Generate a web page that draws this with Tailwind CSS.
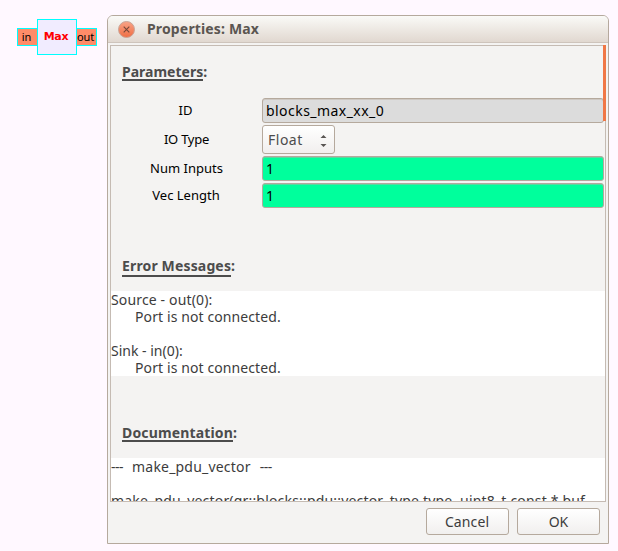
<!DOCTYPE html>
<html lang="en">
<head>
<meta charset="utf-8">
<title>Properties: Max</title>
<script src="https://cdn.jsdelivr.net/npm/@tailwindcss/browser@4"></script>
</head>
<body class="relative h-[551px] w-[618px] overflow-hidden bg-[#fff8ff] font-['Noto_Sans',sans-serif] text-[14px] leading-[17px] text-[#3c3c3c]">
<!-- Flow graph block -->
<div class="absolute left-[17px] top-[19px] flex items-center text-[11px] leading-[15px] text-black">
  <div class="h-[18px] w-[20px] border border-r-0 border-[#00ffff] bg-[#ff8c69] pr-[2px] text-center"><span>in</span></div>
  <div class="h-[36px] w-10 border border-[#00ffff] bg-[#f1ecff] pr-[2px] text-center font-['DejaVu_Sans',sans-serif] text-[11px] font-bold leading-[33px] text-[#ff0000]"><span class="tracking-[-0.3px]">Max</span></div>
  <div class="h-[18px] w-5 border border-l-0 border-[#00ffff] bg-[#ff8c69] pr-[2px] text-center"><span class="tracking-[-0.2px]">out</span></div>
</div>
<!-- Properties dialog -->
<main class="absolute left-[107px] top-[15px] flex h-[529px] w-[502px] flex-col overflow-hidden rounded-t-[6px] border border-[#b5a99d] bg-[#f4f3f2]">
  <header class="flex h-[27px] shrink-0 items-center border-b border-[#cec4bc] bg-linear-to-b from-[#fafaf7] to-[#e1d8d0] pl-[10px]">
    <svg class="h-[17px] w-[17px]" viewBox="0 0 17 17">
      <defs><linearGradient id="c" x2="0" y2="1"><stop stop-color="#f9a386"/><stop offset="1" stop-color="#ef6e44"/></linearGradient></defs>
      <circle cx="8.5" cy="8.5" r="8" fill="url(#c)" stroke="#c9a598"/>
      <path d="M5.7 5.7l5.6 5.6M11.3 5.7l-5.6 5.6" stroke="#754738" stroke-width="1.1"/>
    </svg>
    <h1 class="-mt-[2px] ml-[12px] font-bold text-[#5b5651]"><span class="tracking-[0.15px]">Properties: Max</span></h1>
  </header>
  <section class="relative ml-[2px] mt-[2px] flex h-[457px] w-[496px] shrink-0 flex-col overflow-hidden border border-[#c5bbb3]">
    <h2 class="mt-[17px] h-[35px] shrink-0 pl-[11px] text-[14px] font-bold text-[#4c4c4c]"><span class="inline-block h-[18px] border-b-2 border-[#4c4c4c]">Parameters</span>:</h2>
    <div class="grid shrink-0 grid-cols-[151px_342px] text-black">
      <div class="h-[27px] pr-[2px] text-center text-[13px] leading-[24px]"><span>ID</span></div>
      <div class="h-[25px] rounded-[3px] border border-[#b5a99d] bg-[#dcdcdc] pl-[3px] leading-[24px] shadow-[inset_0_1px_#cec8c3]"><span class="tracking-[0.45px]">blocks_max_xx_0</span></div>
      <div class="h-[31px] text-center text-[13px] leading-[28px]"><span class="tracking-[-0.25px]">IO Type</span></div>
      <div class="flex h-[29px] w-[73px] items-center justify-between rounded-[3px] border border-[#b5a99d] bg-linear-to-b from-white to-[#f1efee] pl-[5px] pr-[7px] text-[#4c4c4c]"><span class="tracking-[0.5px]">Float</span>
        <svg class="mt-[2px] h-[12px] w-[7px]" viewBox="0 0 7 12" fill="#595653"><path d="M0.5 3L3.5 0l3 3zM0.5 9l3 3l3-3z"/></svg>
      </div>
      <div class="h-[27px] text-center text-[13px] leading-[25px]"><span>Num Inputs</span></div>
      <div class="h-[25px] rounded-[3px] border border-[#b5a99d] bg-[#00ff9c] pl-[3px] leading-[24px] shadow-[inset_0_1px_#5ad7a0]">1</div>
      <div class="h-[27px] pr-px text-center text-[13px] leading-[25px]"><span>Vec Length</span></div>
      <div class="h-[25px] rounded-[3px] border border-[#b5a99d] bg-[#00ff9c] pl-[3px] leading-[24px] shadow-[inset_0_1px_#5ad7a0]">1</div>
    </div>
    <h2 class="mt-[47px] h-[34px] shrink-0 pl-[11px] font-bold text-[#4c4c4c]"><span class="inline-block h-[20px] border-b-2 border-[#4c4c4c] tracking-[0.15px]">Error Messages</span>:</h2>
    <div class="h-[85px] shrink-0 whitespace-nowrap bg-white">
      <p><span class="tracking-[0.15px]">Source - out(0):</span></p>
      <p class="pl-6"><span class="tracking-[0.1px]">Port is not connected.</span></p>
      <p class="mt-[17px]"><span>Sink - in(0):</span></p>
      <p class="pl-6"><span class="tracking-[0.1px]">Port is not connected.</span></p>
    </div>
    <h2 class="mt-[48px] h-[34px] shrink-0 pl-[11px] font-bold text-[#4c4c4c]"><span class="inline-block h-[18px] border-b-2 border-[#4c4c4c] tracking-[0.15px]">Documentation</span>:</h2>
    <div class="h-[60px] shrink-0 whitespace-nowrap bg-white">
      <p class="flex gap-[9px]"><span class="tracking-[-0.5px]">---</span><span class="tracking-[0.2px]">make_pdu_vector</span><span class="tracking-[-0.5px]">---</span></p>
      <p class="mt-[17px]"><span class="tracking-[0.18px]">make_pdu_vector(gr::blocks::pdu::vector_type type, uint8_t const * buf,</span></p>
    </div>
  </section>
  <div class="absolute right-[2px] top-[29px] h-[76px] w-[3px] bg-[#f07746]"></div>
  <footer class="mt-[6px] flex justify-end gap-2 pr-[8px] text-center text-[#3c3c3c]">
    <div class="h-[27px] w-[83px] rounded-[3px] border border-[#b5a99d] bg-linear-to-b from-white to-[#f1efee] pr-px leading-[26px]"><span class="tracking-[0.1px]">Cancel</span></div>
    <div class="h-[27px] w-[83px] rounded-[3px] border border-[#b5a99d] bg-linear-to-b from-white to-[#f1efee] leading-[26px]"><span>OK</span></div>
  </footer>
</main>
</body>
</html>
